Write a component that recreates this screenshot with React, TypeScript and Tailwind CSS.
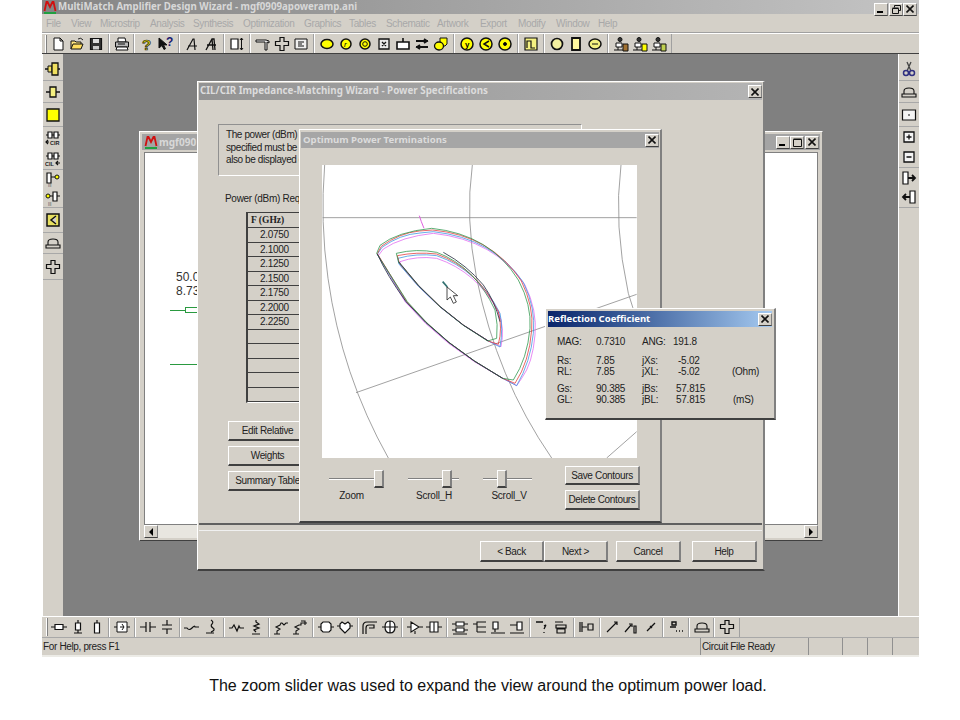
import type { ReactNode } from "react";

const bevel = "border border-t-white border-l-white border-r-[#808080] border-b-[#404040]";
const sans = "font-['Liberation_Sans',Arial,sans-serif]";
const titleFont = "font-['Noto_Sans',sans-serif] font-bold";
const Y = "#ffff00";
const R = "#ffffff";

const circle = (inner?: ReactNode, r = 5) => (
  <>
    <circle cx="8" cy="8" r={r} fill={Y} strokeWidth="1.5" />
    {inner}
  </>
);

const net = (fill: string) => (
  <>
    <path d="M3 7h6v4H3zM1 14h9M5 11v3" fill={R} />
    <circle cx="7" cy="3.5" r="2" fill="#333" />
    <path d="M10 8h5v7h-5z" fill={fill} />
  </>
);

// all the little toolbar glyphs, 16x16
const icons: Record<string, ReactNode> = {
  new: <path d="M4 2h6l3 3v9H4zM10 2v3h3" fill={R} />,
  open: (
    <>
      <path d="M2 13V5h4l1 1h5v2" fill="#ffe680" />
      <path d="M2 13l2-5h10l-2 5z" fill="#ffdf60" />
      <path d="M9 3q3-2 5 1" stroke="#222" />
    </>
  ),
  save: (
    <>
      <path d="M2.5 2.5h11v11h-11z" fill="#333" strokeWidth="1.2" />
      <path d="M5 3h6v4H5z" fill="#ddd" stroke="none" />
      <path d="M5 10h6v3.5H5z" fill="#ccc" stroke="none" />
    </>
  ),
  print: (
    <>
      <path d="M4 2h7l1 4H4z" fill={R} />
      <path d="M1.5 6h13v5h-13z" fill="#b8b8b8" />
      <path d="M3 11h10l1 3H2z" fill={R} />
      <path d="M4 8h7" />
    </>
  ),
  help: (
    <text x="3" y="14" fontSize="15" fontWeight="700" fontFamily="Liberation Sans" fill="#d8c800" stroke="#222" strokeWidth="0.7">?</text>
  ),
  whats: (
    <>
      <path d="M1 2v10l3-2.5 2 4 1.5-.8-2-3.8h3.5z" fill="#111" />
      <text x="8" y="10" fontSize="12" fontWeight="700" fontFamily="Liberation Sans" fill="#1a1a70" stroke="none">?</text>
    </>
  ),
  a1: <path d="M3 14L9 3h1l1 11M4 10h9" strokeWidth="1.2" />,
  a2: <path d="M3 14L9 3h2l1 11M4 9h9M9 3l1 11" strokeWidth="1.3" />,
  box: (
    <>
      <path d="M2 3h7v10H2z" fill={R} strokeWidth="1.2" />
      <path d="M12.5 2v12M11 4l1.5-2L14 4M11 12l1.5 2 1.5-2" />
    </>
  ),
  tee: <path d="M1 4h10l3 1v2l-2-1v8H10V6H1z" fill="#e8e8e8" />,
  cross: <path d="M6 1.5h4v4h4.5v4H10v5H6v-5H1.5v-4H6z" fill="none" strokeWidth="1.2" />,
  ebox: <path d="M2 3h12v10H2zM5 6h6M5 8h4M5 10h6" fill="#f0f0f0" />,
  yEll: <ellipse cx="8" cy="8" rx="6" ry="4.5" fill={Y} strokeWidth="1.5" />,
  yR: circle(<text x="6" y="11" fontSize="8" fontStyle="italic" fill="#000" stroke="none">r</text>),
  yRing: circle(<circle cx="8" cy="8" r="2.3" fill="none" />),
  xbox: <path d="M3 3h10v10H3zM6 6l4 4M10 6l-4 4" fill="#e8e8e8" strokeWidth="1.3" />,
  tbox: <path d="M2 6h12v7H2zM8 6V2" fill={R} strokeWidth="1.6" />,
  arrows: <path d="M2 5h12M2 11h12M10 3l3 2-3 2M6 9l-3 2 3 2" strokeWidth="1.8" />,
  yShape: (
    <>
      <path d="M7 2h7v6l-2 2H7z" fill={Y} />
      <ellipse cx="6" cy="10" rx="4.5" ry="4" fill={Y} strokeWidth="1.3" />
    </>
  ),
  yY: circle(<text x="6" y="11" fontSize="8" fontWeight="700" fill="#000" stroke="none">y</text>, 6),
  yShare: circle(<path d="M11 5L6 8l5 3" strokeWidth="1.5" />, 6),
  yDot: circle(<circle cx="8" cy="8" r="1.5" fill="#000" />, 6),
  pulse: <path d="M2 2h12v12H2zM4 12V5h4v7h4" fill="#f4f080" strokeWidth="1.2" />,
  yC2: <circle cx="8" cy="8" r="5.5" fill="#f4f0a0" strokeWidth="1.7" />,
  yRect: <path d="M4 2h8v12H4z" fill="#fff8a0" strokeWidth="1.8" />,
  yE2: (
    <>
      <ellipse cx="8" cy="8" rx="6" ry="5" fill="#f4f080" strokeWidth="1.5" />
      <path d="M5 8h6" />
    </>
  ),
  net1: net("#a07030"),
  net2: net(Y),
  net3: net("#c0d050"),

  // left / right bars
  lYCap: (
    <>
      <path d="M0 8h3M15 8h-2" strokeWidth="1.5" />
      <path d="M3 5h4v6H3z" fill="#f0e060" />
      <path d="M7 2h6v12H7z" fill="#f0e060" strokeWidth="1.3" />
    </>
  ),
  lYBar: <path d="M1 8h4M11 8h4M5 3h6v10H5z" fill="#f4f080" strokeWidth="1.3" />,
  lYSq: <path d="M2 2h12v12H2z" fill={Y} strokeWidth="1.3" />,
  cirR: (
    <>
      <path d="M1 5h2M7 5h2M13 5h2" />
      <path d="M3 2h4v6H3zM9 2h4v6H9z" fill={R} strokeWidth="1.2" />
      <path d="M1 12h3M3 10l-2 2 2 2" strokeWidth="1.2" />
      <text x="5" y="15" fontSize="5.5" fontWeight="700" fill="#222" stroke="none">CIR</text>
    </>
  ),
  cilL: (
    <>
      <path d="M1 5h2M7 5h2M13 5h2" />
      <path d="M3 2h4v6H3zM9 2h4v6H9z" fill={R} strokeWidth="1.2" />
      <text x="0" y="15" fontSize="5.5" fontWeight="700" fill="#222" stroke="none">CIL</text>
      <path d="M11 12h4M13 10l-2 2 2 2" strokeWidth="1.2" />
    </>
  ),
  pinY: (
    <>
      <path d="M2 2h4v10H2zM6 6h4" fill={R} strokeWidth="1.2" />
      <circle cx="12" cy="6" r="2" fill={Y} />
      <text x="3" y="16" fontSize="4.5" fill="#444" stroke="none">|||</text>
    </>
  ),
  pinB: (
    <>
      <circle cx="3" cy="6" r="2" fill={Y} />
      <path d="M5 6h3M8 2h4v9H8zM12 6h3" fill={R} strokeWidth="1.2" />
      <text x="3" y="16" fontSize="4.5" fill="#444" stroke="none">|||</text>
    </>
  ),
  ySplit: <path d="M2 2h12v12H2zM11 4L6 8l5 4" fill="#e8e060" strokeWidth="1.5" />,
  hat: <path d="M1 13h14v-3H1zM3 10V7q0-3 5-3t5 3v3" strokeWidth="1.1" />,
  scissors: (
    <>
      <path d="M10 1L6 10M6 1l4 9" stroke="#444" strokeWidth="1.3" />
      <circle cx="5" cy="12" r="2.5" stroke="#303080" strokeWidth="1.5" />
      <circle cx="11" cy="12" r="2.5" stroke="#303080" strokeWidth="1.5" />
    </>
  ),
  boxDot: <path d="M1.5 3h13v10h-13zM7 8h2" fill="#f4f4f4" strokeWidth="1.2" />,
  plusBox: <path d="M3 3h10v10H3zM5.5 8h5M8 5.5v5" fill="#f4f4f4" strokeWidth="1.3" />,
  minusBox: <path d="M3 3h10v10H3zM5.5 8h5" fill="#f4f4f4" strokeWidth="1.3" />,
  portR: (
    <>
      <path d="M2 2h5v12H2z" fill={R} strokeWidth="1.2" />
      <path d="M7 8h7M11 5l3 3-3 3" strokeWidth="1.8" />
    </>
  ),
  portL: (
    <>
      <path d="M9 2h5v12H9z" fill={R} strokeWidth="1.2" />
      <path d="M9 8H2M5 5L2 8l3 3" strokeWidth="1.8" />
    </>
  ),

  // bottom bar
  res: <path d="M0 8h4M12 8h4M4 5.5h8v5H4z" fill={R} strokeWidth="1.2" />,
  resV: <path d="M8 1v3M8 11v3M5.5 4h5v7h-5zM4 14h8" fill={R} strokeWidth="1.2" />,
  resO: <path d="M8 1v3M5.5 4h5v10h-5z" fill={R} strokeWidth="1.2" />,
  xfmr: <path d="M0 8h3M13 8h3M3 3h10v10H3zM6 8h4M8 5l2 3-2 3" fill={R} />,
  cap: <path d="M0 8h6M10 8h6M6 3v10M10 3v10" strokeWidth="1.2" />,
  capV: <path d="M8 1v5M8 10v5M3 6h10M3 10h10" strokeWidth="1.2" />,
  ind: <path d="M0 9h3q2 3 5 0t3-1h4" strokeWidth="1.2" />,
  indV: <path d="M8 1q3 2 1 4t1 4-2 4M3 14h8" strokeWidth="1.2" />,
  zig: <path d="M0 9h3l2-3 3 6 2-5 1 2h4" strokeWidth="1.2" />,
  zigV: <path d="M8 1v2l3 2-5 2 5 2-5 2 2 2M4 15h8" strokeWidth="1.2" />,
  z1: <path d="M1 15h6M4 15v-3l3-2-4-2 4-2 1-2h1l2 2 2-2h2" strokeWidth="1.1" />,
  z2: <path d="M1 15h6M4 15v-3l3-2-4-2 4-2h2V4h6M9 2h4v4" strokeWidth="1.1" />,
  bl1: <path d="M0 8h3M13 8h3M5 3h6l2 2v6l-2 2H5l-2-2V5z" fill={R} strokeWidth="1.2" />,
  bl2: <path d="M0 7h3M13 7h3M8 14L3 9V5l2-2 3 2 3-2 2 2v4z" fill={R} strokeWidth="1.2" />,
  bend: <path d="M1 15V7q0-4 4-4h10M4 15V9q0-3 3-3h5v3H7" strokeWidth="1.2" />,
  cpl: <path d="M3 8q0-6 5-6t5 6-5 6-5-6zM0 8h16M8 2v12" fill={R} strokeWidth="1.2" />,
  tri: <path d="M0 8h4M12 8h4M4 3l8 5-8 5zM8 12v3" fill={R} strokeWidth="1.1" />,
  stub: <path d="M0 8h4M12 8h4M4 3h8v10H4zM8 3v10" fill={R} strokeWidth="1.1" />,
  mm1: <path d="M0 5h4M12 5h4M0 11h4M12 11h4M4 3h8v4H4zM4 9h8v4H4zM1 15h14" fill={R} strokeWidth="1.1" />,
  mm2: <path d="M15 3H6v5h9M6 5H2M15 13H6M6 8v5" strokeWidth="1.1" />,
  mm3: <path d="M3 3h5v7H3zM5 10v3M1 14h14" strokeWidth="1.2" fill={R} />,
  mm4: <path d="M8 3h5v8H8zM1 6h7M1 14h14" strokeWidth="1.2" fill={R} />,
  q1: <path d="M2 3h7M10 7q3-2 1 1l-1 2M10 13v1" strokeWidth="1.3" />,
  q2: <path d="M2 3h8M3 6h10v3H3zM4 10h8v4H4z" strokeWidth="1.2" />,
  q3: <path d="M1 3v10M3 3v10M3 8h5M9 5h5v6H9z" strokeWidth="1.2" />,
  d1: <path d="M3 13L13 3M10 3h3v3" strokeWidth="1.2" />,
  d2: <path d="M2 13L8 6M6 5h3v3M11 7v7h2V7z" strokeWidth="1.2" />,
  d3: <path d="M4 12L12 4M7 7l2 2" strokeWidth="1.3" />,
  dots: <path d="M4 3h4v3H4zM2 8h6M8 12h1M11 12h1M14 12h1" strokeWidth="1.4" />,
};

function Icon({ name }: { name: string }) {
  return (
    <svg width="16" height="16" viewBox="0 0 16 16" fill="none" stroke="#111" strokeWidth="1" className="shrink-0">
      {icons[name]}
    </svg>
  );
}

function HBar({ items, sep }: { items: string[]; sep: string }) {
  return (
    <>
      {items.map((it, i) =>
        it === "|" ? (
          <div key={i} className={`w-[2px] h-[19px] ${sep} border-l border-l-[#a0a0a0] border-r border-r-white`} />
        ) : (
          <div key={i} className="w-[19.1px] flex justify-center">
            <Icon name={it} />
          </div>
        )
      )}
    </>
  );
}

const menus: [string, string][] = [
  ["File", "w-[25px]"],
  ["View", "w-[29px]"],
  ["Microstrip", "w-[50px]"],
  ["Analysis", "w-[43px]"],
  ["Synthesis", "w-[50px]"],
  ["Optimization", "w-[61px]"],
  ["Graphics", "w-[45px]"],
  ["Tables", "w-[37px]"],
  ["Schematic", "w-[51px]"],
  ["Artwork", "w-[43px]"],
  ["Export", "w-[38px]"],
  ["Modify", "w-[38px]"],
  ["Window", "w-[42px]"],
  ["Help", "w-[30px]"],
];

const topTools = ["new", "open", "save", "|", "print", "|", "help", "whats", "|", "a1", "a2", "|", "box", "|", "tee", "cross", "ebox", "|", "yEll", "yR", "yRing", "xbox", "tbox", "arrows", "yShape", "|", "yY", "yShare", "yDot", "|", "pulse", "|", "yC2", "yRect", "yE2", "|", "net1", "net2", "net3"];
const bottomTools = ["res", "resV", "resO", "|", "xfmr", "|", "cap", "capV", "|", "ind", "indV", "|", "zig", "zigV", "|", "z1", "z2", "|", "bl1", "bl2", "|", "bend", "cpl", "|", "tri", "stub", "|", "mm1", "mm2", "mm3", "mm4", "|", "q1", "q2", "|", "q3", "|", "d1", "d2", "d3", "|", "dots", "|", "hat", "|", "cross"];

const leftBar: [string[], string][] = [
  [["lYCap"], "h-[23px]"],
  [["lYBar"], "h-[22px]"],
  [["lYSq"], "h-[24px]"],
  [["cirR", "cilL"], "h-[43px]"],
  [["pinY", "pinB"], "h-[38px]"],
  [["ySplit"], "h-[25px]"],
  [["hat"], "h-[21px]"],
  [["cross"], "h-[26px]"],
];
const rightBar: [string[], string][] = [
  [["scissors"], "h-[23px]"],
  [["hat"], "h-[22px]"],
  [["boxDot"], "h-[24px]"],
  [["plusBox", "minusBox"], "h-[41px]"],
  [["portR", "portL"], "h-[40px]"],
];

function VBar({ groups }: { groups: [string[], string][] }) {
  return (
    <div className="w-[21px] shrink-0 bg-[#d4d0c8] border-l border-white pt-1">
      {groups.map(([names, h], i) => (
        <div key={i} className={`${h} flex flex-col items-center justify-around border-b border-b-[#a8a8a8]`}>
          {names.map((n) => (
            <Icon key={n} name={n} />
          ))}
        </div>
      ))}
    </div>
  );
}

function WinBtn({ children, className = "w-[14px]" }: { children?: ReactNode; className?: string }) {
  return (
    <div className={`${className} h-[13px] bg-[#d4d0c8] ${bevel} flex items-center justify-center shrink-0`}>
      {children}
    </div>
  );
}

const closeGlyph = (
  <svg width="8" height="8" viewBox="0 0 8 8" stroke="#111" strokeWidth="1.6">
    <path d="M0.5 0.5l7 7M7.5 0.5l-7 7" />
  </svg>
);
const minGlyph = <div className="w-[6px] h-[2px] bg-black mt-[6px] mr-[2px]" />;
const restoreGlyph = (
  <svg width="9" height="9" viewBox="0 0 9 9" fill="none" stroke="#111">
    <path d="M2.5 2.5v-2h6v5h-2M0.5 3.5h6v5h-6zM0.5 3h6" />
  </svg>
);
const maxGlyph = (
  <svg width="9" height="9" viewBox="0 0 9 9" fill="none" stroke="#111">
    <path d="M0.5 1.5h8v7h-8zM0.5 1h8" />
  </svg>
);

function Logo() {
  return (
    <svg width="14" height="14" viewBox="0 0 14 14" className="shrink-0">
      <path d="M1.5 11L3.5 2h1l2.5 5 2.5-5h1l2 9" fill="none" stroke="#d01010" strokeWidth="1.8" />
      <path d="M1 13h12" stroke="#20a040" strokeWidth="2" />
    </svg>
  );
}

function Btn({ children, className }: { children: ReactNode; className: string }) {
  return (
    <div className={`${className} bg-[#d4d0c8] ${bevel} border-b-2 border-r-2 flex items-center justify-center text-[10px] tracking-[-0.35px] text-[#222] whitespace-nowrap overflow-hidden ${sans}`}>
      {children}
    </div>
  );
}

function Slider({ width, thumb, label, labelPad }: { width: string; thumb: string; label: string; labelPad: string }) {
  return (
    <div className={`${width} flex flex-col items-center`}>
      <div className="relative w-full h-[24px]">
        <div className="absolute inset-x-0 top-[12px] h-[2px] bg-[#808080] border-b border-b-white" />
        <div className={`absolute top-[4px] ${thumb} w-[10px] h-[18px] bg-[#d4d0c8] ${bevel} border-b-2 border-r-2`} />
      </div>
      <div className={`text-[10px] tracking-[-0.25px] leading-[12px] ${labelPad} text-[#222] ${sans}`}>{label}</div>
    </div>
  );
}

const tableRows = ["2.0750", "2.1000", "2.1250", "2.1500", "2.1750", "2.2000", "2.2250", "", "", "", "", ""];

function Val({ c, children }: { c: string; children?: ReactNode }) {
  return <div className={`${c} shrink-0 whitespace-nowrap`}>{children}</div>;
}

function CoefRow({ cells, pad = "", unit = "", className = "" }: { cells: [string, string, string, string, string?]; pad?: string; unit?: string; className?: string }) {
  return (
    <div className={`flex h-[11px] leading-[11px] ${className}`}>
      <Val c="w-[39px]">{cells[0]}</Val>
      <Val c="w-[46px]">{cells[1]}</Val>
      <Val c="w-[31px]">{cells[2]}</Val>
      <Val c={`w-[59px] ${pad}`}>{cells[3]}</Val>
      <Val c={`w-[40px] ${unit}`}>{cells[4]}</Val>
    </div>
  );
}

function Contours() {
  return (
    <svg viewBox="6 0 945 879" width="315" height="293" fill="none" className="block">
      <g stroke="#8a8a8a" strokeWidth="2.4">
        <path d="M8 158H950" />
        <path d="M14 0Q0 170 24 340Q65 630 205 879" />
        <path d="M457 0Q435 160 470 340Q530 640 695 879" />
        <path d="M903 0Q880 180 925 385Q940 430 950 470" />
        <path d="M108 683L950 388" />
        <path d="M860 879L950 800" />
      </g>
      <path d="M298 152L304 170L312 190" stroke="#e060e0" strokeWidth="3" />
      <g strokeWidth="2.2">
        <path stroke="#e060f0" d="M175 272L190 252Q245 215 340 205Q525 225 615 360Q652 435 645 510Q638 595 605 640L590 662L548 640Q370 545 255 410Z" />
        <path stroke="#3090e0" d="M172 268L186 247Q240 208 300 204L340 200Q520 220 610 352Q648 430 640 505Q632 590 590 662L548 640Q370 540 258 410Z" />
        <path stroke="#e03030" d="M172 266L184 244Q238 204 298 198L338 195Q515 212 604 348Q642 425 635 495Q628 590 585 655L548 640Q370 540 260 410Z" />
        <path stroke="#209040" d="M170 265L180 241Q232 200 335 190Q510 208 595 345Q635 420 630 490Q622 580 580 645L548 640Q370 540 262 410Z" />
        <path stroke="#e060f0" d="M240 290Q290 272 350 280Q470 320 535 440Q555 490 543 545L505 528Q350 440 240 300Z" />
        <path stroke="#3090e0" d="M234 280Q290 264 350 272Q475 315 540 445Q550 490 540 546L505 528Q350 440 236 296Z" />
        <path stroke="#e03030" d="M232 272Q290 260 350 267Q470 310 535 440Q548 490 535 538L505 528Q350 440 238 294Z" />
        <path stroke="#209040" d="M229 265Q290 250 350 262Q465 305 525 435Q535 480 530 520L503 528Q350 440 236 292Z" />
        <path stroke="#303848" strokeWidth="2.6" d="M172 267Q200 330 258 410Q370 540 548 640M236 290Q350 440 505 528M370 262Q440 300 490 360Q525 410 540 470" />
      </g>
      <path d="M368 350L382 366" stroke="#307070" strokeWidth="5" />
      <path d="M381 366V405L391 396L400 415L409 411L400 392L413 392Z" fill="#fff" stroke="#222" strokeWidth="2.4" />
    </svg>
  );
}

export default function App() {
  return (
    <div className={`w-[960px] h-[720px] bg-white overflow-hidden ${sans}`}>
      <div className="ml-[42px] w-[877px] h-[657px] bg-[#d4d0c8] flex flex-col">
        {/* title bar */}
        <div className="h-[14px] shrink-0 flex items-center bg-gradient-to-r from-[#858585] to-[#c4c4c4] pl-[1px] pr-[2px]">
          <Logo />
          <span className={`ml-[1px] text-[9.7px] text-[#d8d8d8] whitespace-nowrap ${titleFont}`}>MultiMatch Amplifier Design Wizard - mgf0909apoweramp.ani</span>
          <div className="ml-auto flex mt-[4px]">
            <WinBtn>{minGlyph}</WinBtn>
            <WinBtn className="w-[14px] ml-[1px]">{restoreGlyph}</WinBtn>
            <WinBtn>{closeGlyph}</WinBtn>
          </div>
        </div>
        {/* menu */}
        <div className={`h-[19px] shrink-0 flex items-center pl-[4px] border-b border-b-[#a0a0a0] text-[10px] tracking-[-0.35px] text-[#a8a8a8] ${sans}`}>
          {menus.map(([m, w]) => (
            <div key={m} className={`${w} whitespace-nowrap`}>{m}</div>
          ))}
        </div>
        {/* top toolbar */}
        <div className="h-[20px] shrink-0 flex items-center border-t border-t-white pl-[3px]">
          <div className="w-[2px] h-[18px] mr-[1px] border-l border-white border-r border-r-[#808080]" />
          <HBar items={topTools} sep="mx-[2.35px]" />
          <div className="w-[2px] h-[19px] ml-[1px] border-r border-r-[#a0a0a0]" />
        </div>
        <div className="flex-1 flex min-h-0 border-t border-t-[#404040]">
          <VBar groups={leftBar} />
          {/* workspace */}
          <div className="relative flex-1 bg-[#808080] overflow-hidden">
            {/* child document window */}
            <div className={`absolute left-[76px] top-[77px] w-[684px] h-[410px] bg-[#d4d0c8] ${bevel} p-[2px] flex flex-col`}>
              <div className="h-[16px] shrink-0 flex items-center bg-[#a4a4a4] pl-[2px] pr-[1px]">
                <Logo />
                <span className={`ml-[1px] text-[10px] text-[#d8d8d8] whitespace-nowrap ${titleFont}`}>mgf090</span>
                <div className="ml-auto flex">
                  <WinBtn>{minGlyph}</WinBtn>
                  <WinBtn className="w-[14px] mr-[1px]">{maxGlyph}</WinBtn>
                  <WinBtn>{closeGlyph}</WinBtn>
                </div>
              </div>
              <div className="mx-[2px] mt-[2px] flex-1 bg-white border border-[#808080] relative">
                <div className="ml-[31px] mt-[117px] text-[12px] leading-[14px] text-[#333]">
                  50.0<br />8.73
                </div>
                <div className="ml-[25px] mt-[9px] flex items-center">
                  <div className="w-[15px] h-[1px] bg-[#2a9a40]" />
                  <div className="w-[40px] h-[6px] border border-[#2a9a40]" />
                </div>
                <div className="ml-[25px] mt-[51px] w-[40px] h-[1px] bg-[#2a9a40]" />
              </div>
              <div className="mx-[2px] h-[13px] shrink-0 flex justify-between bg-[#e8e6e0]">
                <WinBtn>
                  <div className="w-0 h-0 border-y-[4px] border-y-transparent border-r-[4px] border-r-black" />
                </WinBtn>
                <WinBtn>
                  <div className="w-0 h-0 border-y-[4px] border-y-transparent border-l-[4px] border-l-black" />
                </WinBtn>
              </div>
            </div>

            {/* wizard */}
            <div className={`absolute left-[134px] top-[27px] w-[568px] h-[490px] bg-[#d4d0c8] ${bevel} border-b-2 border-r-2 p-[1px] flex flex-col`}>
              <div className="h-[17px] shrink-0 flex items-center bg-gradient-to-r from-[#939393] to-[#b4b4b4] pl-[1px]">
                <span className={`text-[9.8px] text-[#dcdcdc] whitespace-nowrap ${titleFont}`}>CIL/CIR Impedance-Matching Wizard - Power Specifications</span>
                <div className="ml-auto"><WinBtn>{closeGlyph}</WinBtn></div>
              </div>
              <div className="ml-[19px] mt-[24px] w-[364px] h-[52px] shrink-0 border border-[#909090] border-b-white border-r-white pl-[7px] pt-[4px] text-[10px] tracking-[-0.4px] leading-[12.5px] text-[#222] whitespace-nowrap">
                The power (dBm) r<br />specified must be<br />also be displayed g
              </div>
              <div className="ml-[26px] mt-[17px] text-[10px] tracking-[-0.3px] leading-[12px] text-[#222] whitespace-nowrap">Power (dBm) Requ</div>
              <div className="ml-[47px] mt-[7px] w-[54px] border-l-2 border-t border-[#404040] border-b border-b-white text-[#222] overflow-hidden">
                <div className="h-[15px] leading-[15px] pl-[3px] font-bold font-['Liberation_Serif',serif] text-[9.5px] whitespace-nowrap border-b border-b-[#404040]">F (GHz)</div>
                {tableRows.map((r, i) => (
                  <div key={i} className="h-[14.5px] leading-[14px] border-b border-b-[#404040] pl-[12px] text-[10px] tracking-[-0.3px]">{r}</div>
                ))}
              </div>
              <div className="ml-[29px] mt-[18px] flex flex-col gap-[5px]">
                <Btn className="w-[80px] h-[20px]">Edit Relative</Btn>
                <Btn className="w-[80px] h-[20px]">Weights</Btn>
                <Btn className="w-[80px] h-[20px]">Summary Table</Btn>
              </div>
              <div className="mt-auto h-[8px] border-t-2 border-t-[#606060] border-b border-b-[#f0f0f0]" />
              <div className="h-[37px] shrink-0 pt-[10px] flex">
                <Btn className="ml-[281px] w-[64px] h-[21px]">&lt; Back</Btn>
                <Btn className="w-[64px] h-[21px]">Next &gt;</Btn>
                <Btn className="ml-[8px] w-[65px] h-[21px]">Cancel</Btn>
                <Btn className="ml-[11px] w-[65px] h-[21px]">Help</Btn>
              </div>
            </div>

            {/* optimum power terminations */}
            <div className={`absolute left-[236px] top-[75px] w-[363px] h-[394px] bg-[#d4d0c8] ${bevel} border-b-2 border-r-2 p-[1px] flex flex-col`}>
              <div className="h-[16px] mt-[1px] shrink-0 flex items-center bg-[#a6a6a6] pl-[2px]">
                <span className={`text-[9.6px] text-[#dcdcdc] whitespace-nowrap ${titleFont}`}>Optimum Power Terminations</span>
                <div className="ml-auto"><WinBtn>{closeGlyph}</WinBtn></div>
              </div>
              <div className="ml-[21px] mt-[17px] w-[315px] h-[293px] bg-white shrink-0 overflow-hidden">
                <Contours />
              </div>
              <div className="mt-[8px] flex">
                <div className="ml-[28px] flex gap-[24px]">
                  <Slider width="w-[55px]" thumb="left-[45px]" label="Zoom" labelPad="pr-[10px]" />
                  <Slider width="w-[51px]" thumb="left-[34px]" label="Scroll_H" labelPad="pl-[1px]" />
                  <Slider width="w-[49px]" thumb="left-[14px]" label="Scroll_V" labelPad="pl-[3px]" />
                </div>
                <div className="ml-[33px] flex flex-col gap-[5px]">
                  <Btn className="w-[75px] h-[19px]">Save Contours</Btn>
                  <Btn className="w-[75px] h-[20px]">Delete Contours</Btn>
                </div>
              </div>
            </div>

            {/* reflection coefficient */}
            <div className={`absolute left-[482px] top-[254px] w-[231px] h-[112px] bg-[#d4d0c8] ${bevel} border-b-2 border-r-2 p-[2px] flex flex-col`}>
              <div className="h-[16px] shrink-0 flex items-center bg-gradient-to-r from-[#0a246a] to-[#a6caf0]">
                <span className={`text-[9.5px] text-white whitespace-nowrap ${titleFont}`}>Reflection Coefficient</span>
                <div className="ml-auto"><WinBtn>{closeGlyph}</WinBtn></div>
              </div>
              <div className="pl-[9px] pt-[9px] text-[10px] tracking-[-0.25px] text-[#222]">
                <CoefRow cells={["MAG:", "0.7310", "ANG:", "191.8"]} />
                <CoefRow className="mt-[8px]" pad="pl-[5px]" cells={["Rs:", "7.85", "jXs:", "-5.02"]} />
                <CoefRow pad="pl-[5px]" cells={["RL:", "7.85", "jXL:", "-5.02", "(Ohm)"]} />
                <CoefRow className="mt-[6px]" pad="pl-[3px]" cells={["Gs:", "90.385", "jBs:", "57.815"]} />
                <CoefRow pad="pl-[3px]" unit="pl-[1px]" cells={["GL:", "90.385", "jBL:", "57.815", "(mS)"]} />
              </div>
            </div>
          </div>
          <VBar groups={rightBar} />
        </div>
        {/* bottom toolbar */}
        <div className="h-[21px] shrink-0 flex items-center border-t border-t-white pl-[4px]">
          <div className="w-[2px] h-[18px] mr-[1px] border-l border-white border-r border-r-[#808080]" />
          <HBar items={bottomTools} sep="mx-[2.2px]" />
          <div className="w-[2px] h-[19px] ml-[1px] border-r border-r-[#a0a0a0]" />
        </div>
        {/* status bar */}
        <div className="h-[20px] shrink-0 flex items-stretch border-t border-t-[#a8a8a8] border-b-2 border-b-[#ecebe6] text-[10px] tracking-[-0.35px] text-[#222]">
          <div className="flex-1 pl-[1px] leading-[17px]">For Help, press F1</div>
          <div className="w-[108px] border-l border-[#909090] pl-[1px] leading-[17px]">Circuit File Ready</div>
          <div className="w-[34px] border-l border-[#909090]" />
          <div className="w-[25px] border-l border-[#909090]" />
          <div className="w-[25px] border-l border-[#909090]" />
          <div className="w-[27px] border-l border-[#909090]" />
        </div>
      </div>
      <div className="mt-[21px] pl-[16px] text-center text-[16px] leading-[16px] text-[#111]">
        The zoom slider was used to expand the view around the optimum power load.
      </div>
    </div>
  );
}
